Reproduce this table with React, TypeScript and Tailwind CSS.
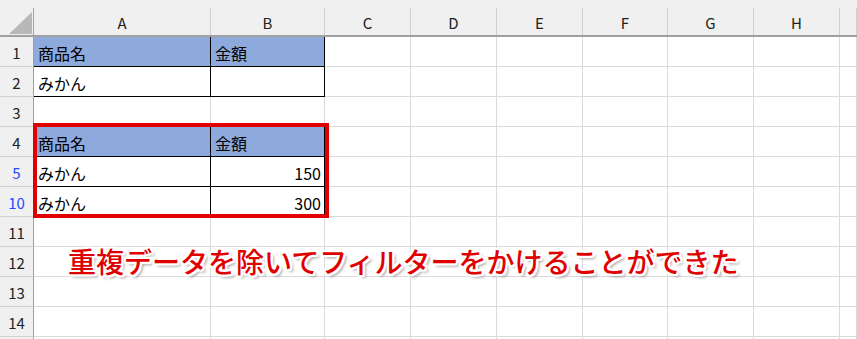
import React from 'react'

type Cell = { text?: string; fill?: boolean; boxed?: boolean; align?: 'left' | 'right' }
type Row = { label: string; filtered?: boolean; a?: Cell; b?: Cell; boxBottom?: boolean }

const columns = ['A', 'B', 'C', 'D', 'E', 'F', 'G', 'H', '']

// rows 6-9 are hidden by the filter, so row 10 follows row 5
const rows: Row[] = [
  { label: '1', a: { text: '商品名', fill: true, boxed: true }, b: { text: '金額', fill: true, boxed: true } },
  { label: '2', a: { text: 'みかん', boxed: true }, b: { boxed: true } },
  { label: '3', boxBottom: true },
  { label: '4', a: { text: '商品名', fill: true, boxed: true }, b: { text: '金額', fill: true, boxed: true } },
  { label: '5', filtered: true, a: { text: 'みかん', boxed: true }, b: { text: '150', boxed: true, align: 'right' } },
  { label: '10', filtered: true, a: { text: 'みかん', boxed: true }, b: { text: '300', boxed: true, align: 'right' } },
  { label: '11' },
  { label: '12' },
  { label: '13' },
  { label: '14' },
  { label: '' },
]

const gridCols = 'grid grid-cols-[34px_177px_114px_86px_86px_86px_85px_86px_86px_1fr]'

function DataCell({ cell, boxBottom }: { cell?: Cell; boxBottom?: boolean }) {
  const boxed = cell?.boxed
  return (
    <div
      className={`h-[30px] border-r border-b flex items-center pt-[3px] text-[16px] text-black ${
        cell?.fill ? 'bg-[#8ea9db]' : 'bg-white'
      } ${boxed ? 'border-r-black border-b-black' : 'border-r-[#dadada] border-b-[#dadada]'} ${
        boxBottom ? 'border-b-black' : ''
      } ${cell?.align === 'right' ? 'justify-end pr-[3px]' : 'pl-[4px]'}`}
    >
      {cell?.text}
    </div>
  )
}

export default function App() {
  return (
    <div className="relative w-[857px] h-[339px] overflow-hidden bg-white font-['Noto_Sans_CJK_JP','Noto_Sans',sans-serif] leading-none">
      <div className="h-[8px] bg-[#f0f0f0]" />

      {/* column headers */}
      <div className={`${gridCols} h-[29px] bg-[#f0f0f0] border-b-2 border-b-[#a0a0a0]`}>
        <div className="relative border-r border-r-[#a0a0a0]">
          <svg className="absolute left-[9px] top-[4px]" width="23" height="22" viewBox="0 0 23 22">
            <path d="M23 0 L23 22 L0 22 Z" fill="#b8b8b8" />
          </svg>
        </div>
        {columns.map((c, i) => (
          <div
            key={i}
            className="flex items-center justify-center pt-[2px] text-[15px] text-[#222] border-r border-r-[#d0d0d0]"
          >
            {c}
          </div>
        ))}
      </div>

      {/* sheet body */}
      {rows.map((row, r) => (
        <div key={r} className={gridCols}>
          <div
            className={`h-[30px] flex items-center justify-center pt-[2px] text-[15px] bg-[#f0f0f0] border-r border-r-[#a0a0a0] border-b border-b-[#d0d0d0] ${
              row.filtered ? 'text-[#2348ff]' : 'text-[#222]'
            }`}
          >
            {row.label}
          </div>
          <DataCell cell={row.a} boxBottom={row.boxBottom} />
          <DataCell cell={row.b} boxBottom={row.boxBottom} />
          {columns.slice(2).map((c, i) => (
            <div key={i} className="h-[30px] border-r border-b border-[#dadada]" />
          ))}
        </div>
      ))}

      {/* highlight around the filtered table */}
      <div className="absolute left-[33px] top-[123px] w-[296px] h-[95px] border-4 border-[#e00000] pointer-events-none" />

      <div className="absolute left-[68px] top-[247px] text-[28px] font-medium leading-none text-[#e00000] whitespace-nowrap [text-shadow:2px_0_0_#fff,-2px_0_0_#fff,0_2px_0_#fff,0_-2px_0_#fff,2px_2px_0_#fff,-2px_2px_0_#fff,2px_-2px_0_#fff,-2px_-2px_0_#fff,3px_3px_3px_#9a9a9a]">
        重複データを除いてフィルターをかけることができた
      </div>
    </div>
  )
}
